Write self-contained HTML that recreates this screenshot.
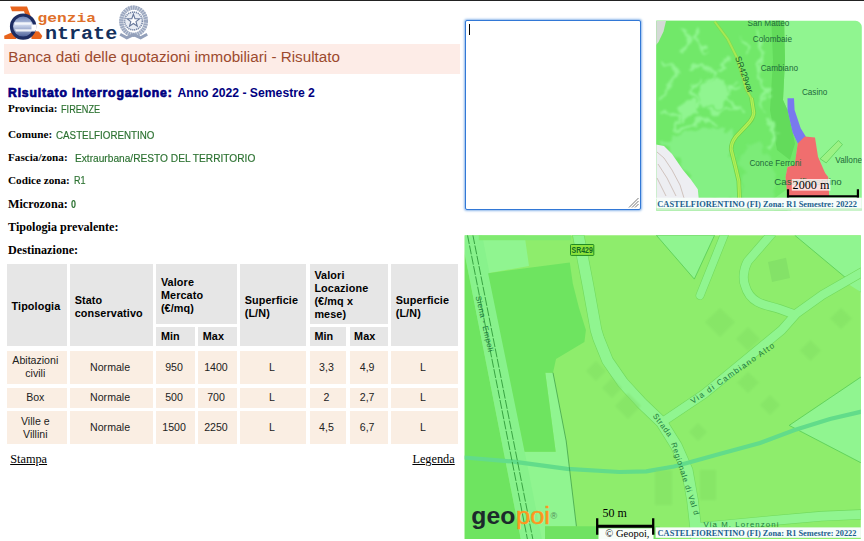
<!DOCTYPE html>
<html lang="it">
<head>
<meta charset="utf-8">
<title>Banca dati delle quotazioni immobiliari - Risultato</title>
<style>
html,body{margin:0;padding:0;background:#fff;}
body{width:864px;height:541px;position:relative;overflow:hidden;font-family:"Liberation Serif",serif;color:#000;}
.abs{position:absolute;white-space:nowrap;}
#topline{left:0;top:0;width:864px;height:1px;background:#222;}
#banner{left:4px;top:44.1px;width:456.2px;height:29.6px;background:#fdece7;}
#banner span{position:absolute;left:4.3px;top:4.1px;font:15.22px/17px "Liberation Sans",sans-serif;color:#9c4a2e;}
#h1{left:8px;top:84.5px;font:bold 12.2px/16px "Liberation Sans",sans-serif;color:#000080;}
#h1 b{font-size:12.2px;-webkit-text-stroke:0.7px #000080;letter-spacing:0.84px;}
#h1b{position:absolute;left:169.4px;top:0;}
.lbl{left:8px;font:bold 11.2px/13px "Liberation Serif",serif;color:#000;}
.lbl i{position:absolute;top:0.7px;font:normal 10px/13px "Liberation Sans",sans-serif;color:#2a702f;-webkit-text-stroke:0.15px #2a702f;transform-origin:0 0;}
.lbl2{left:8px;font:bold 12.15px/14px "Liberation Serif",serif;color:#000;}
.lbl2 i{position:absolute;top:0;font-style:normal;color:#2a702f;}
.c{position:absolute;box-sizing:border-box;font:10.8px/13px "Liberation Sans",sans-serif;color:#222;}
.h{background:#e6e6e6;font-weight:bold;display:flex;align-items:center;padding-left:4.5px;padding-top:2.4px;color:#000;letter-spacing:0.12px;}
.h.s{padding-top:0.4px;}
.d{background:#faeee3;display:flex;align-items:center;justify-content:center;text-align:center;padding-right:3px;font-size:10.6px;}
a.lnk{position:absolute;font:12.3px/14px "Liberation Serif",serif;color:#000;text-decoration:underline;}

#taw{left:464.9px;top:20.3px;width:176.3px;height:190px;}
#ta{display:block;margin:0;padding:0;width:176.3px;height:190px;box-sizing:border-box;border:1.7px solid #3278d6;border-radius:2px;background:#fff;box-shadow:0 0 2.2px 1px #8fb8ea;resize:none;outline:none;overflow:hidden;font:11px "Liberation Mono",monospace;}
#caret{position:absolute;left:4px;top:4.2px;width:1px;height:11px;background:#000;}
#grip{position:absolute;right:2.7px;bottom:2.7px;}
</style>
</head>
<body>
<div class="abs" id="topline"></div>

<!-- logo -->
<svg class="abs" id="logo" style="left:0;top:2px" width="160" height="42" viewBox="0 2 160 42">
<defs>
<linearGradient id="lg1" x1="0" y1="0" x2="0" y2="1"><stop offset="0" stop-color="#5d74ad"/><stop offset="0.45" stop-color="#c9d3ea"/><stop offset="1" stop-color="#3c5290"/></linearGradient>
</defs>
<path d="M10.2 6.5H27L32 19.5L27 20.5L24 11.3H12Z" fill="#e8641c"/>
<path d="M4.2 35.8L13.9 31.5L16.5 38.9H4.4Z" fill="#e8641c"/>
<path d="M31 30.8L38.9 31.5L42.3 36.1L40.9 38.9H31.5Z" fill="#e8641c"/>
<circle cx="23.1" cy="26.6" r="11.6" fill="url(#lg1)" stroke="#1d2c62" stroke-width="3.2"/>
<path d="M14.5 22.3H31.5V24.8H14.5Z" fill="#f4f6fb"/>
<path d="M15 29.2H35.5V31.6H16Z" fill="#eef1f8"/>
<path d="M31.5 24.5H36.5V30H31.5Z" fill="#fff"/>
<text x="37.6" y="22.1" font-family="Liberation Mono, monospace" font-weight="bold" font-size="13.6" fill="#e0702a" textLength="58.5" lengthAdjust="spacingAndGlyphs">genzia</text>
<text x="44.9" y="38.8" font-family="Liberation Mono, monospace" font-weight="bold" font-size="19" fill="#14305c" textLength="72.3" lengthAdjust="spacingAndGlyphs">ntrate</text>
<g fill="none" stroke="#8796b4">
<ellipse cx="133.6" cy="21.2" rx="12.3" ry="13.6" stroke-width="4.2" stroke-dasharray="1.7 0.7" stroke="#8e9cb8"/>
<ellipse cx="133.6" cy="21.2" rx="12.3" ry="13.6" stroke-width="4.2" stroke="#aab5ca" opacity="0.45"/>
<circle cx="133.5" cy="21" r="8.9" stroke-width="1.6" stroke-dasharray="1.3 0.7" stroke="#7888a8" fill="#e9edf4"/>
<polygon points="133.40,14.20 134.99,18.62 139.68,18.76 135.97,21.63 137.28,26.14 133.40,23.50 129.52,26.14 130.83,21.63 127.12,18.76 131.81,18.62" stroke-width="1.1" fill="#fdfdfe" stroke="#66779a"/>
<path d="M120.2 34.2L126.8 37.8L133.6 34.6L140.6 37.8L147.2 34.2" stroke-width="3" stroke="#93a0ba"/>
</g>
</svg>
<div class="abs" id="banner"><span>Banca dati delle quotazioni immobiliari - Risultato</span></div>
<div class="abs" id="h1"><b>Risultato interrogazione:</b><span id="h1b">Anno 2022 - Semestre 2</span></div>
<div class="abs lbl" style="top:102px"><span id="l1">Provincia:</span><i id="v1" style="left:53px;transform:scaleX(0.916)">FIRENZE</i></div>
<div class="abs lbl" style="top:128px"><span id="l2">Comune:</span><i id="v2" style="left:48.1px;transform:scaleX(0.979)">CASTELFIORENTINO</i></div>
<div class="abs lbl" style="top:151px"><span id="l3">Fascia/zona:</span><i id="v3" style="left:67px;transform:scaleX(1.016)">Extraurbana/RESTO DEL TERRITORIO</i></div>
<div class="abs lbl" style="top:173.5px"><span id="l4">Codice zona:</span><i id="v4" style="left:65.8px;transform:scaleX(0.9)">R1</i></div>
<div class="abs lbl2" style="top:197px"><span id="l5">Microzona:</span><i id="v5" style="left:62.6px;top:1.2px;font:bold 10px/13px 'Liberation Sans',sans-serif;transform:scaleX(0.9);transform-origin:0 0">0</i></div>
<div class="abs lbl2" style="top:220px"><span id="l6">Tipologia prevalente:</span></div>
<div class="abs lbl2" style="top:242.6px"><span id="l7">Destinazione:</span></div>

<!-- table -->
<div id="tbl">
<div class="c h" style="left:7px;top:264.4px;width:59.6px;height:82px">Tipologia</div>
<div class="c h" style="left:70.2px;top:264.4px;width:82.8px;height:82px">Stato<br>conservativo</div>
<div class="c h" style="left:156.4px;top:264.4px;width:80.4px;height:59.2px">Valore<br>Mercato<br>(€/mq)</div>
<div class="c h s" style="left:156.4px;top:327px;width:38.3px;height:19.4px">Min</div>
<div class="c h s" style="left:198.2px;top:327px;width:38.6px;height:19.4px">Max</div>
<div class="c h" style="left:240.2px;top:264.4px;width:66.3px;height:82px">Superficie<br>(L/N)</div>
<div class="c h" style="left:309.9px;top:264.4px;width:77.8px;height:59.2px">Valori<br>Locazione<br>(€/mq x<br>mese)</div>
<div class="c h s" style="left:309.9px;top:327px;width:36.2px;height:19.4px">Min</div>
<div class="c h s" style="left:349.6px;top:327px;width:38.1px;height:19.4px">Max</div>
<div class="c h" style="left:391.2px;top:264.4px;width:66.4px;height:82px">Superficie<br>(L/N)</div>
<div class="c d" style="left:7px;top:350.7px;width:59.6px;height:33.1px">Abitazioni<br>civili</div>
<div class="c d" style="left:70.2px;top:350.7px;width:82.8px;height:33.1px">Normale</div>
<div class="c d" style="left:156.4px;top:350.7px;width:38.3px;height:33.1px">950</div>
<div class="c d" style="left:198.2px;top:350.7px;width:38.6px;height:33.1px">1400</div>
<div class="c d" style="left:240.2px;top:350.7px;width:66.3px;height:33.1px">L</div>
<div class="c d" style="left:309.9px;top:350.7px;width:36.2px;height:33.1px">3,3</div>
<div class="c d" style="left:349.6px;top:350.7px;width:38.1px;height:33.1px">4,9</div>
<div class="c d" style="left:391.2px;top:350.7px;width:66.4px;height:33.1px">L</div>

<div class="c d" style="left:7px;top:387.5px;width:59.6px;height:20.2px">Box</div>
<div class="c d" style="left:70.2px;top:387.5px;width:82.8px;height:20.2px">Normale</div>
<div class="c d" style="left:156.4px;top:387.5px;width:38.3px;height:20.2px">500</div>
<div class="c d" style="left:198.2px;top:387.5px;width:38.6px;height:20.2px">700</div>
<div class="c d" style="left:240.2px;top:387.5px;width:66.3px;height:20.2px">L</div>
<div class="c d" style="left:309.9px;top:387.5px;width:36.2px;height:20.2px">2</div>
<div class="c d" style="left:349.6px;top:387.5px;width:38.1px;height:20.2px">2,7</div>
<div class="c d" style="left:391.2px;top:387.5px;width:66.4px;height:20.2px">L</div>

<div class="c d" style="left:7px;top:411.2px;width:59.6px;height:33px">Ville e<br>Villini</div>
<div class="c d" style="left:70.2px;top:411.2px;width:82.8px;height:33px">Normale</div>
<div class="c d" style="left:156.4px;top:411.2px;width:38.3px;height:33px">1500</div>
<div class="c d" style="left:198.2px;top:411.2px;width:38.6px;height:33px">2250</div>
<div class="c d" style="left:240.2px;top:411.2px;width:66.3px;height:33px">L</div>
<div class="c d" style="left:309.9px;top:411.2px;width:36.2px;height:33px">4,5</div>
<div class="c d" style="left:349.6px;top:411.2px;width:38.1px;height:33px">6,7</div>
<div class="c d" style="left:391.2px;top:411.2px;width:66.4px;height:33px">L</div>
</div>

<a class="lnk" style="left:10.2px;top:451.8px">Stampa</a>
<a class="lnk" style="left:412.4px;top:451.8px">Legenda</a>

<!-- textarea -->
<div class="abs" id="taw"><textarea id="ta" rows="10" cols="20"></textarea><div id="caret"></div>
<svg id="grip" width="11" height="11" viewBox="0 0 11 11"><path d="M1 10.5L10.5 1M4 10.5L10.5 4M7 10.5L10.5 7" stroke="#777" stroke-width="1" fill="none"/></svg>
</div>

<!-- small map -->
<svg class="abs" id="smap" style="left:650px;top:15px" width="214" height="205" viewBox="650 15 214 205">
<defs>
<filter id="blur1" x="-20%" y="-20%" width="140%" height="140%"><feTurbulence type="fractalNoise" baseFrequency="0.09" numOctaves="2" seed="4" result="n"/><feDisplacementMap in="SourceGraphic" in2="n" scale="16" xChannelSelector="R" yChannelSelector="G" result="d"/><feGaussianBlur in="d" stdDeviation="1.1"/></filter>
<clipPath id="sclip"><path d="M656.3 20.8H855.5a6.3 6.3 0 0 1 6.3 6.3V210.4H656.3Z"/></clipPath>
</defs>
<g clip-path="url(#sclip)" font-family="Liberation Sans, sans-serif">
<rect x="650" y="15" width="214" height="205" fill="#90f590"/>
<!-- west region -->
<path d="M650 15H784L785 60L783 100L787.5 110L792.6 132.4L797.7 143.6L794.6 164.9L787.5 167L785.5 177.1L787.5 197L787.5 215H650Z" fill="#71e869"/>
<path d="M771 15H784L785 60L783 100L787.5 110L792.6 132.4L795 143.6L790 160L777 150L770 110L773 60Z" fill="#63db5b"/>
<!-- lower lighter area -->
<g filter="url(#blur1)">
<path d="M662 141L700 127L733 131L731 150L738 180L739 201L698 201L690 178L676 158Z" fill="#84f084"/>
<path d="M741 150L760 140L770 160L775 200L742 200Z" fill="#7cec78"/>
</g>
<!-- veins -->
<g filter="url(#blur1)" fill="none" stroke="#90f590" stroke-width="3.2" stroke-linecap="round" stroke-linejoin="round">
<path d="M684 30L690 42L682 52M700 26L694 40L706 50"/>
<path d="M662 62L676 70L672 86L660 96"/>
<path d="M690 68L704 64L716 74L708 86L722 92L716 104"/>
<path d="M700 80L690 92L700 102L690 112"/>
<path d="M728 60L720 70M736 84L726 96L734 106"/>
<path d="M664 112L680 118L676 132L690 126L704 118L716 124"/>
<path d="M706 108L722 112L738 104L744 114"/>
<path d="M758 30L764 50L758 70L766 90L762 112"/>
<path d="M744 40L750 56M768 120L776 134L770 150"/>
</g>
<g filter="url(#blur1)" fill="#90f590">
<path d="M700 84L724 80L732 96L720 108L700 104Z"/>
<path d="M676 104L694 100L698 116L682 122Z"/>
</g>
<!-- leaf polygon -->
<path d="M820.1 158.8L838.4 140.5L842.4 144.6L826.2 162.9Z" fill="#9cf284" stroke="#4cc24c" stroke-width="0.6"/>
<path d="M797 198L789 215H775L772 200L786 190Z" fill="#84ee7c"/>
<!-- grey corner -->
<path d="M656 21L666 21L663.5 31.6L658.5 42L656 45Z" fill="#d4dad6"/>
<!-- white SW -->
<path d="M656 144.5L664 146L672 154L683 170L690.7 179.2L697.8 189.3L698.8 199L656 199Z" fill="#edeef2"/>
<path d="M657 152L664 158L672 170L680 185L684 198M658 164L667 178L676 196M657 178L666 196" fill="none" stroke="#c8b8b0" stroke-width="0.8"/>
<!-- road -->
<path d="M714.7 21.5L727.6 39L736.9 57.5L746.1 88.9L752.3 100" fill="none" stroke="#7cdc54" stroke-width="3.2" stroke-linejoin="round"/>
<path d="M714.7 21.5L727.6 39L736.9 57.5L746.1 88.9L752.3 100" fill="none" stroke="#a8e852" stroke-width="1.8" stroke-linejoin="round"/>
<path d="M751.5 98L753.8 113C753 119 750 122 746.3 125.6L736 136.5C732.5 141 731 145 731.2 149.7L735.7 167.7L738.8 181L739.5 198" fill="none" stroke="#6ed24e" stroke-width="4.6" stroke-linejoin="round"/>
<path d="M751.5 98L753.8 113C753 119 750 122 746.3 125.6L736 136.5C732.5 141 731 145 731.2 149.7L735.7 167.7L738.8 181L739.5 198" fill="none" stroke="#b6f052" stroke-width="3" stroke-linejoin="round"/>
<path d="M751.5 98L753.8 113C753 119 750 122 746.3 125.6L736 136.5C732.5 141 731 145 731.2 149.7L735.7 167.7L738.8 181L739.5 198" fill="none" stroke="#8ee45a" stroke-width="0.8" stroke-linejoin="round"/>
<!-- blue -->
<path d="M787.5 98.2L794 98.2L794.6 110L800.7 128.3L805.8 136.4L804.8 143.6L797.7 143.6L792.6 132.4L787.5 110Z" fill="#7979ef"/>
<!-- red -->
<path d="M804.8 136.4L815 137.5L818 156.8L825.1 173.1L828.2 177.1L829.2 197L787.5 197L785.5 177.1L787.5 167L794.6 164.9L797.7 143.6Z" fill="#f06e6e"/>
<g font-size="8.2" fill="#1d6a3a">
<text x="747.5" y="25.5">San Matteo</text>
<text x="752.8" y="42.3">Colombaie</text>
<text x="760.7" y="70.6">Cambiano</text>
<text x="801.9" y="94.6">Casino</text>
<text x="749.4" y="166">Conce Ferroni</text>
<text x="835.3" y="162.6">Vallone</text>
<text x="774.3" y="185.4" font-size="9.6" textLength="67.4" lengthAdjust="spacingAndGlyphs">Castelfiorentino</text>
<text transform="translate(735 57.5) rotate(70)" font-size="8.6" fill="#175c2c">SR429var</text>
</g>
<rect x="791.8" y="179" width="38.6" height="11.6" fill="#fff" opacity="0.78"/>
<text x="792.6" y="188.6" font-family="Liberation Serif, serif" font-size="12.15" fill="#000">2000 m</text>
<path d="M788 189.2V198M857.9 189.2V198M787 196.4H859" stroke="#000" stroke-width="2.2" fill="none"/>
<rect x="650" y="197.7" width="214" height="11" fill="#f7fcfa"/>
<rect x="650" y="208.7" width="214" height="4" fill="#cdeecd"/>
<text x="657.3" y="206.9" font-family="Liberation Serif, serif" font-weight="bold" font-size="8.6" fill="#1b5f8e" textLength="199.6" lengthAdjust="spacingAndGlyphs">CASTELFIORENTINO (FI) Zona: R1 Semestre: 20222</text>
</g>
</svg>

<!-- big map -->
<svg class="abs" id="bmap" style="left:456px;top:225px" width="408" height="316" viewBox="456 225 408 316">
<defs><filter id="blur2" x="-30%" y="-30%" width="160%" height="160%"><feGaussianBlur stdDeviation="1.2"/></filter><clipPath id="bclip"><rect x="464.7" y="235.2" width="396.1" height="303.7"/></clipPath></defs>
<g clip-path="url(#bclip)" font-family="Liberation Sans, sans-serif">
<rect x="456" y="225" width="408" height="316" fill="#8eed6c"/>
<!-- far left -->
<path d="M456 225L461 235.2L521.2 541L456 541Z" fill="#6ee460"/>
<!-- light area under field -->
<path d="M477.9 235.2L524.6 235.2L529 265.9L488.1 273.2L524.6 451.8L555.7 451.8L545.3 372.7L553 372.7L566.2 441L576.4 526.2L545 526.2L545 541L521.2 541Z" fill="#90f590"/>
<!-- rail band -->
<path d="M461 235.2L482.1 235.2L542.3 541L521.2 541Z" fill="#88f28c"/>
<path d="M478.8 235.2H571V240.2H478.8Z" fill="#80ea70"/>
<!-- dark field -->
<path d="M488.1 273.2L569.8 262.4L572.8 283.4L579 308L585.9 330.1L584.4 342L556 359L553 372.7L545.3 372.7L555.7 451.8L524.6 451.8Z" fill="#6ee460"/>
<!-- bottom strip -->
<path d="M545 526.2L660 526.2L660 541L545 541Z" fill="#70e262"/>
<!-- top-right light regions -->
<path d="M656.3 235.2L714.6 235.2L694.3 279.1Z" fill="#90f590" stroke="#4fc64f" stroke-width="0.7"/>
<path d="M794.7 235.2L862 235.2L862 271.7L846.6 278.5Z" fill="#90f590"/>
<path d="M794.7 235.2L846.6 278.5L862 293" fill="none" stroke="#4fc64f" stroke-width="0.7"/>
<path d="M846.6 283L862 275L862 293Z" fill="#90f590"/>
<path d="M789.2 425.4L862 376.3L862 463.3Z" fill="#90f590" stroke="#4fc64f" stroke-width="0.7"/>
<!-- roads -->
<g fill="none" stroke="#72da5e" stroke-linecap="butt" stroke-linejoin="round">
<path d="M577.9 233L588 285.6L596 330L598.6 338.5L607.6 360.7L623 383L641.8 403.3L661.5 422.2L676.6 446.3L687.2 470.4L692.5 500L695.5 526.6L696.5 541" stroke-width="12"/>
<path d="M664.8 420.4L704 394L720 381L781.8 330L796.6 313.3L822.5 294.8L863 271.6" stroke-width="9.5"/>
<path d="M772.3 233L747.6 261.5C742.6 271 743.2 281 745 285.2C747.2 293.5 751.5 298.5 757.5 301.9C764.5 306 772.5 306.3 779.5 309L796 315" stroke-width="9.5"/>
<path d="M725 233L700 295.5" stroke-width="8.7" stroke-linecap="round"/>
<path d="M698 527.6L769.6 520.8L821.5 516.2L863 514.3" stroke-width="10.2"/>
</g>
<g fill="none" stroke="#90f590" stroke-linecap="butt" stroke-linejoin="round">
<path d="M577.9 233L588 285.6L596 330L598.6 338.5L607.6 360.7L623 383L641.8 403.3L661.5 422.2L676.6 446.3L687.2 470.4L692.5 500L695.5 526.6L696.5 541" stroke-width="10.8"/>
<path d="M664.8 420.4L704 394L720 381L781.8 330L796.6 313.3L822.5 294.8L863 271.6" stroke-width="8.3"/>
<path d="M772.3 233L747.6 261.5C742.6 271 743.2 281 745 285.2C747.2 293.5 751.5 298.5 757.5 301.9C764.5 306 772.5 306.3 779.5 309L796 315" stroke-width="8.3"/>
<path d="M725 233L700 295.5" stroke-width="7.5" stroke-linecap="round"/>
<path d="M698 527.6L769.6 520.8L821.5 516.2L863 514.3" stroke-width="9"/>
</g>
<!-- stream -->
<path d="M464 457.5L511.6 461.4L567.1 468.8L619.5 472L646.3 471.3L674 466.5L688.9 462.5L720.4 453.7L760 443L794.6 430L830 419L862 411.5" fill="none" stroke="#62dc8a" stroke-width="4.2"/>
<!-- rails -->
<path d="M467.5 235.2L527.8 541M472.9 235.2L533.2 541" stroke="#2f9a3a" stroke-width="0.9" stroke-dasharray="9 1.5" fill="none"/>
<path d="M566.2 441L576.4 526.2M553 372.7L566.2 441" stroke="#2a8a3a" stroke-width="0.6" fill="none"/>
<!-- buildings -->
<g fill="#7fdd62" opacity="0.42" filter="url(#blur2)">
<path d="M720 308L735 322L720 337L705 322Z"/>
<path d="M748 327L760 339L748 351L736 339Z"/>
<path d="M810.6 340L821 350.5L810.6 361L800 350.5Z"/>
<path d="M841 308L852 318.5L841 329L830 318.5Z"/>
<path d="M596 361L606 371L596 381L586 371Z"/>
<path d="M628 393L641 406L628 419L615 406Z"/>
<path d="M698 423L707 432L698 441L689 432Z"/>
<path d="M748 372L759 382.6L748 393L737 382.6Z"/>
<path d="M700 470L716 470L716 500L700 500Z"/>
<path d="M655 470L672 470L672 505L655 505Z"/>
<path d="M612 378L622 388L612 398L602 388Z"/>
<path d="M770 395L780 405L770 415L760 405Z"/>
</g>
<g fill="#84e268">
<path d="M768 262L786 257.8L790 278L772 282Z"/>
</g>
<!-- labels -->
<rect x="570.5" y="244.5" width="23.3" height="10.9" rx="0.8" fill="#8ee43e" stroke="#1f8a24" stroke-width="1"/>
<text x="571.6" y="252.5" font-size="8.4" font-weight="bold" fill="#0f6a22" textLength="21.2" lengthAdjust="spacingAndGlyphs">SR429</text>
<g font-size="7.8" fill="#1d7a3c">
<text transform="translate(475.6 296.5) rotate(77)" letter-spacing="0.5">Siena - Empoli</text>
<text transform="translate(693 404) rotate(-34.8)" font-size="8" letter-spacing="1.35">Via di Cambiano Alto</text>
<text transform="translate(652.5 416) rotate(53)" letter-spacing="0.7">Strada</text>
<text transform="translate(671 443.5) rotate(72)" letter-spacing="0.75">Regionale di Val d</text>
<text x="703.5" y="527" letter-spacing="1.1">Via M. Lorenzoni</text>
</g>
<!-- geopoi logo -->
<text x="471.3" y="524.3" font-size="23.3" font-weight="bold" fill="#1c2a2c" textLength="44" lengthAdjust="spacingAndGlyphs">geo</text>
<text x="516" y="524.3" font-size="23.3" fill="#ff961e" stroke="#ff961e" stroke-width="0.5" textLength="34" lengthAdjust="spacingAndGlyphs">poi</text>
<text x="550.6" y="519.3" font-size="9" fill="#4f8a5a">®</text>
<!-- scale -->
<text x="602.6" y="516.8" font-family="Liberation Serif, serif" font-size="12" fill="#000">50 m</text>
<rect x="598.5" y="528.4" width="55" height="12" fill="#f8fdf8"/>
<path d="M597.2 518.2V534.7M653.2 518.2V534.7" stroke="#000" stroke-width="2.3" fill="none"/><path d="M597.2 526.3H653.2" stroke="#000" stroke-width="2.9" fill="none"/>
<text x="605.3" y="536.8" font-family="Liberation Serif, serif" font-size="10.5" fill="#000">© Geopoi,</text>
</g>
<rect x="655.6" y="527.4" width="205.3" height="10.4" fill="#f6fcfa"/>
<text x="657.6" y="536.1" font-family="Liberation Serif, serif" font-weight="bold" font-size="8.6" fill="#1b5f8e" textLength="198.8" lengthAdjust="spacingAndGlyphs">CASTELFIORENTINO (FI) Zona: R1 Semestre: 20222</text>
</svg>
</body>
</html>
